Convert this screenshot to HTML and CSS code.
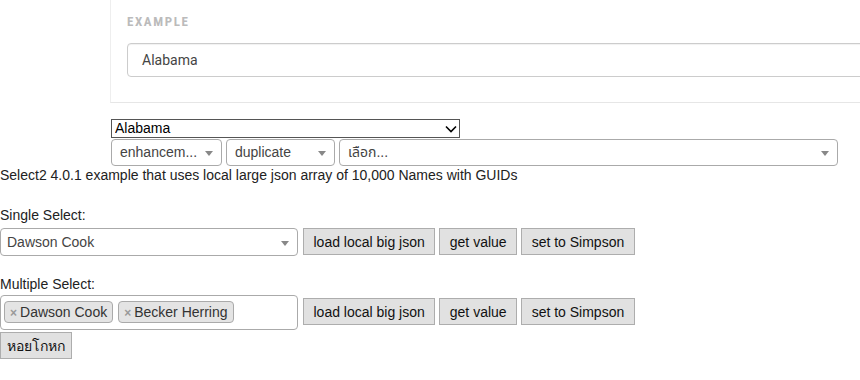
FILE: index.html
```html
<!DOCTYPE html>
<html>
<head>
<meta charset="utf-8">
<link rel="stylesheet" href="styles.css">
</head>
<body>
<div class="panel">
  <div class="panel-label">EXAMPLE</div>
  <div class="panel-input">Alabama</div>
</div>

<div class="controls">
  <div class="native-wrap">
    <select class="native"><option>Alabama</option></select>
    <svg class="chev" width="12" height="8" viewBox="0 0 12 8"><path d="M1 1.5 L6 6.5 L11 1.5" fill="none" stroke="#000" stroke-width="1.6"/></svg>
  </div>
  <div class="s2row">
    <span class="s2 s2-a"><span class="s2-text">enhancem...</span><b class="arrow"></b></span>
    <span class="s2 s2-b"><span class="s2-text">duplicate</span><b class="arrow"></b></span>
    <span class="s2 s2-c"><span class="s2-text thai">เลือก...</span><b class="arrow"></b></span>
  </div>
</div>

<div class="desc">Select2 4.0.1 example that uses local large json array of 10,000 Names with GUIDs</div>

<div class="label label-single">Single Select:</div>
<div class="row row-single">
  <span class="s2 s2-single"><span class="s2-text">Dawson Cook</span><b class="arrow"></b></span>
  <button class="btn">load local big json</button>
  <button class="btn">get value</button>
  <button class="btn">set to Simpson</button>
</div>

<div class="label label-multi">Multiple Select:</div>
<div class="row row-multi">
  <div class="s2multi">
    <span class="tag"><span class="tag-x">×</span>Dawson Cook</span>
    <span class="tag"><span class="tag-x">×</span>Becker Herring</span>
  </div>
  <button class="btn">load local big json</button>
  <button class="btn">get value</button>
  <button class="btn">set to Simpson</button>
</div>

<button class="btn btn-thai thai">หอยโกหก</button>
</body>
</html>
```

FILE: styles.css
```css
html {
  overflow: hidden;
}
body {
  margin: 0;
  font-family: "Liberation Sans", Arial, "Noto Sans Thai", sans-serif;
  font-size: 14px;
  color: #222;
  background: #fff;
}
.thai {
  font-family: "Liberation Sans", "Noto Sans Thai", "Tahoma", sans-serif;
}

/* top example panel */
.panel {
  margin-left: 110px;
  width: 800px;
  border-left: 1px solid #eee;
  border-bottom: 1px solid #e6e6e6;
  padding: 14px 0 25px 16px;
  background: #fff;
}
.panel-label {
  font-family: Roboto, "Liberation Sans", sans-serif;
  font-stretch: condensed;
  font-size: 13px;
  font-weight: 700;
  letter-spacing: 1.6px;
  line-height: 15px;
  color: #bbb;
  margin-bottom: 14px;
}
.panel-input {
  height: 32px;
  border: 1px solid #ccc;
  border-radius: 4px;
  padding-left: 14px;
  font-family: Roboto, "Liberation Sans", sans-serif;
  font-size: 14px;
  line-height: 32px;
  color: #444;
  box-shadow: inset 0 1px 1px rgba(0,0,0,0.06);
}

/* native select + select2 row */
.controls {
  padding-left: 111px;
  margin-top: 16px;
}
.native-wrap {
  position: relative;
  width: 349px;
  height: 19px;
}
.native {
  appearance: none;
  -webkit-appearance: none;
  display: block;
  width: 349px;
  height: 19px;
  margin: 0;
  border: 1px solid #555;
  border-radius: 0;
  background: #fff;
  padding: 0 0 0 3px;
  font-family: "Liberation Sans", Arial, sans-serif;
  font-size: 14px;
  line-height: 17px;
  color: #000;
}
.chev {
  position: absolute;
  right: 3px;
  top: 6px;
}
.s2row {
  display: flex;
  gap: 4px;
  margin-top: 1px;
}
.s2 {
  position: relative;
  display: block;
  box-sizing: border-box;
  height: 27px;
  border: 1px solid #aaa;
  border-radius: 4px;
  background: #fff;
  flex: none;
}
.s2-text {
  display: block;
  padding-left: 8px;
  line-height: 25px;
  color: #444;
  white-space: nowrap;
  overflow: hidden;
}
.arrow {
  position: absolute;
  right: 8px;
  top: 11px;
  width: 0;
  height: 0;
  border-style: solid;
  border-width: 5px 4px 0 4px;
  border-color: #888 transparent transparent transparent;
}
.s2-a { width: 111px; }
.s2-b { width: 109px; }
.s2-c { width: 499px; }

.desc {
  line-height: 16px;
  margin-top: 1px;
}

.label {
  line-height: 16px;
}
.label-single {
  margin-top: 24px;
}
.label-multi {
  margin-top: 20px;
}

.row {
  display: flex;
  gap: 4px;
}
.row-single {
  margin-top: 5px;
  align-items: flex-start;
}
.s2-single {
  width: 298px;
  height: 28px;
}
.s2-single .s2-text {
  padding-left: 6px;
  line-height: 26px;
}
.s2-single .arrow {
  top: 12px;
}

.btn {
  box-sizing: border-box;
  height: 27px;
  margin: 0;
  padding: 0 9.5px;
  border: 1px solid #adadad;
  border-radius: 0;
  background: #e1e1e1;
  font-family: "Liberation Sans", Arial, sans-serif;
  font-size: 14px;
  font-weight: 400;
  color: #111;
}
.s2-single + .btn,
.s2multi + .btn {
  margin-left: 1px;
}

.row-multi {
  margin-top: 3px;
  align-items: flex-start;
}
.row-multi .btn {
  margin-top: 3px;
}
.s2multi {
  box-sizing: border-box;
  width: 298px;
  height: 35px;
  border: 1px solid #aaa;
  border-radius: 4px;
  padding: 5px 3px 0 3px;
  display: flex;
  gap: 5px;
  align-items: flex-start;
}
.tag {
  box-sizing: border-box;
  height: 22px;
  line-height: 20px;
  padding: 0 5px;
  border: 1px solid #aaa;
  border-radius: 4px;
  background: #e4e4e4;
  color: #333;
  white-space: nowrap;
}
.tag-x {
  color: #999;
  font-weight: 700;
  font-size: 12px;
  margin-right: 3px;
}

.btn-thai {
  display: block;
  margin-top: 2px;
  padding: 0 6px;
}
```
